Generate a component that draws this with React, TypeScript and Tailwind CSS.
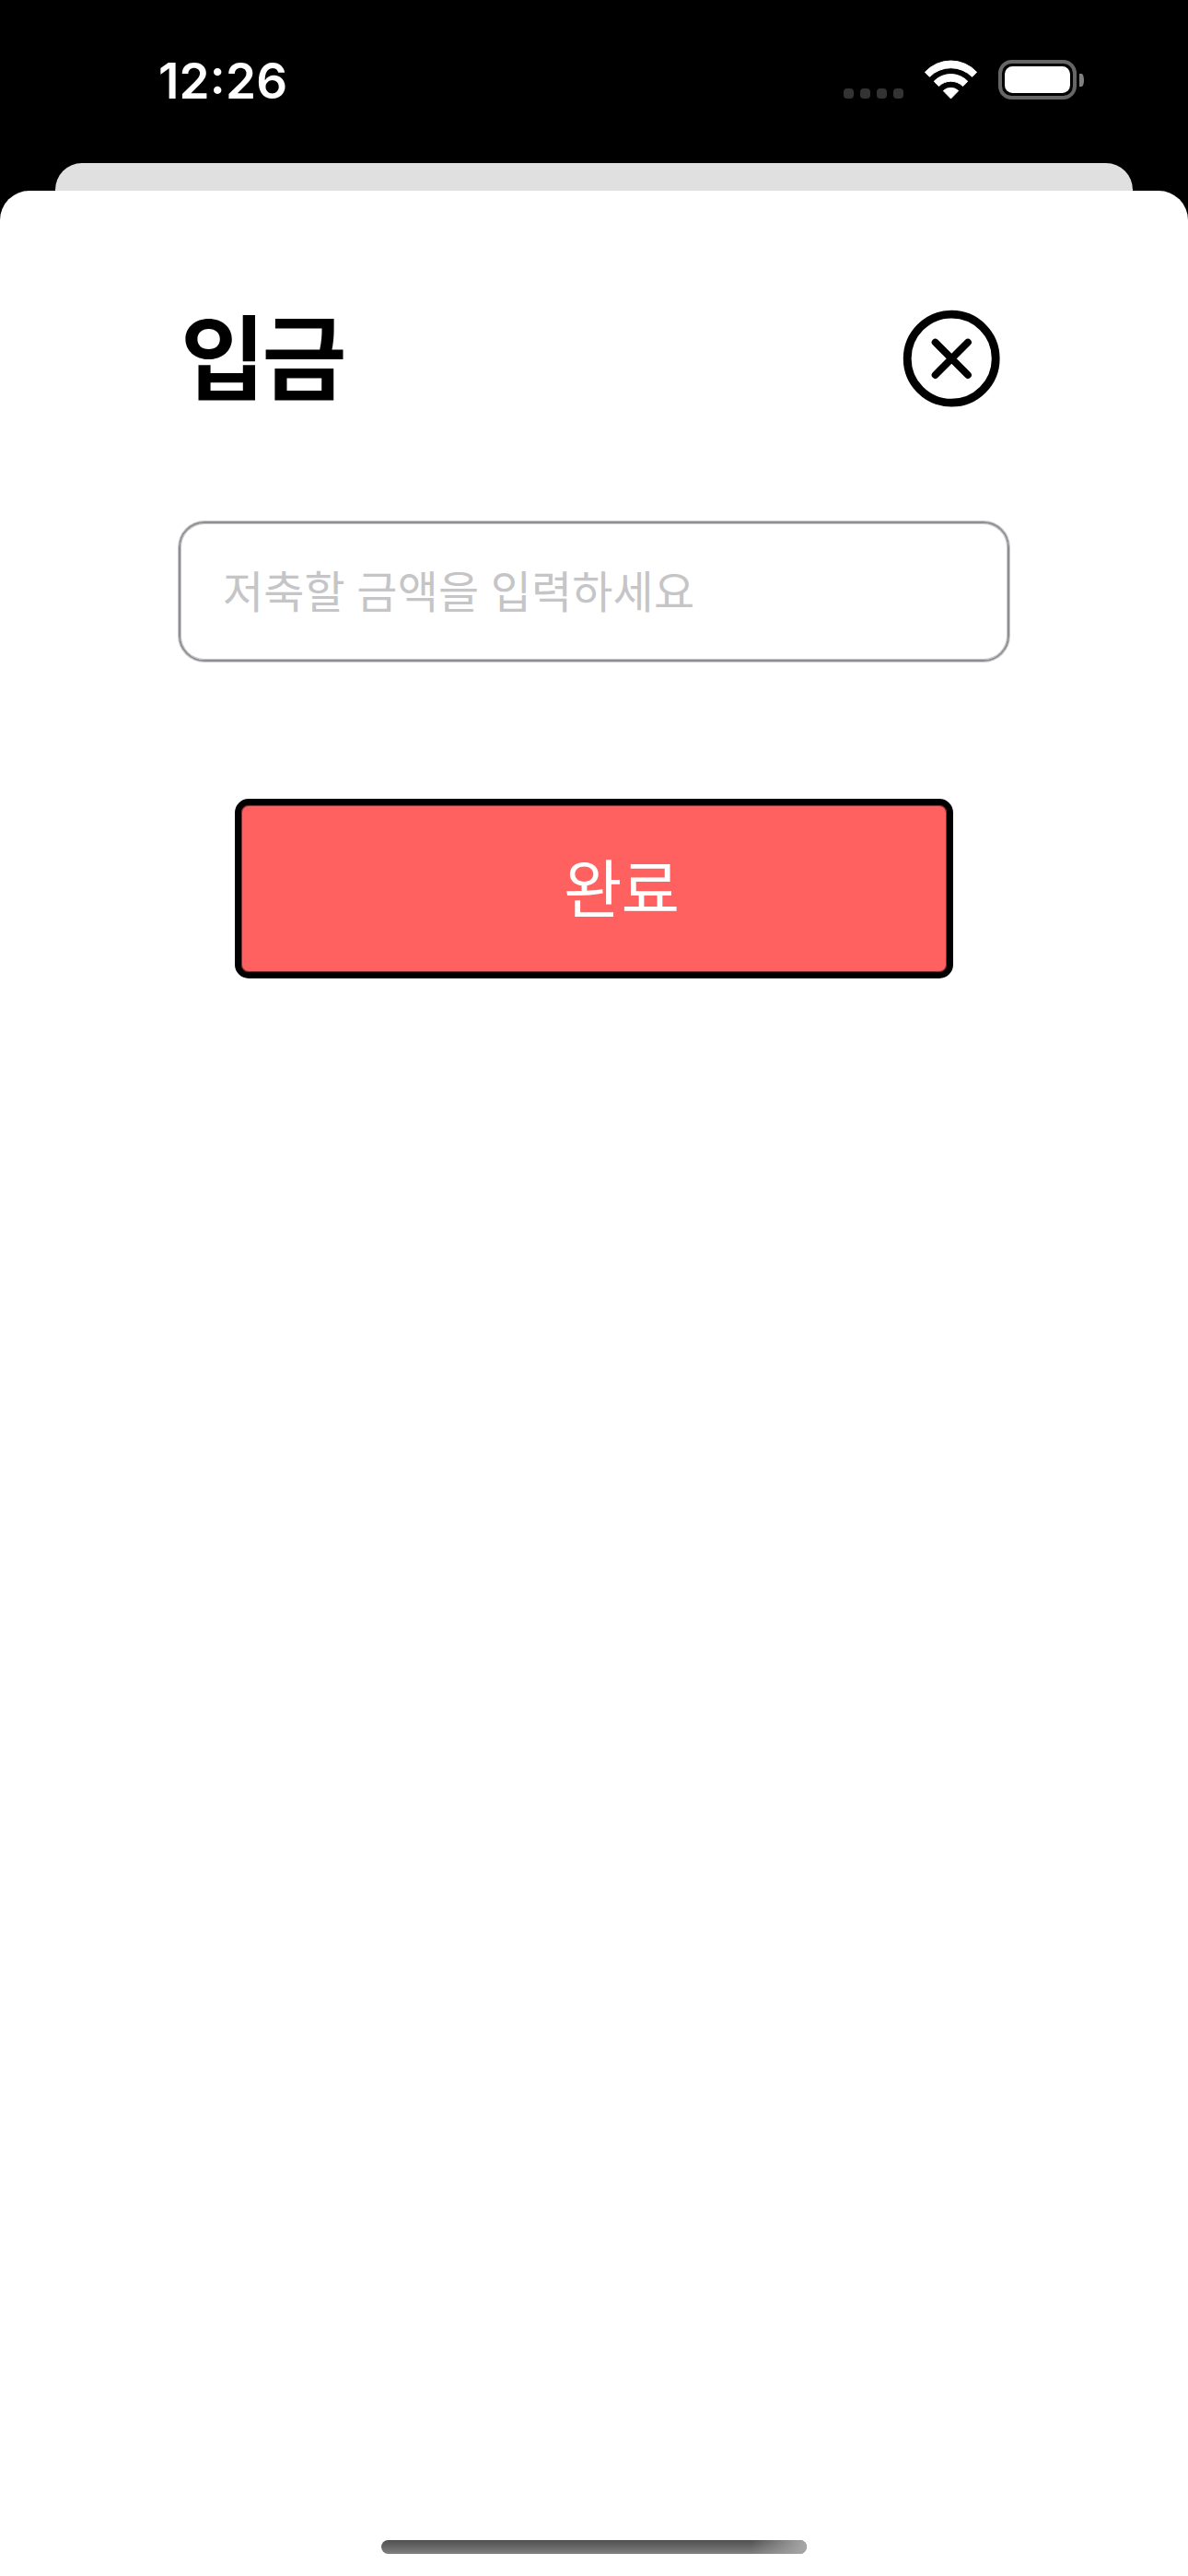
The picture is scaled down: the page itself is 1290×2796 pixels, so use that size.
function SignalDots() {
  return (
    <div className="mt-[96px] flex gap-[7px]">
      {[0, 1, 2, 3].map((dot) => (
        <span key={dot} className="size-[11px] rounded-[4px] bg-[#333333]" />
      ))}
    </div>
  );
}

function WifiIcon() {
  return (
    <svg className="mt-[65px] ml-[23px] block h-[43px] w-[58px]" viewBox="0 0 58 43" fill="#fff">
      <path
        stroke="#fff"
        strokeWidth="1"
        strokeLinejoin="round"
        d="M0.4 12.7A38.3 38.3 0 0 1 56.6 12.7L51.6 17.7A32.6 32.6 0 0 0 5.4 17.7Z M10.2 22.7A25.4 25.4 0 0 1 46.8 22.7L41.6 28A18.6 18.6 0 0 0 15.4 28Z M20.3 33A12 12 0 0 1 36.7 33L28.5 41.4Z"
        transform="translate(0 0.6)"
      />
    </svg>
  );
}

function BatteryIcon() {
  return (
    <div className="mt-[65px] ml-[22px] flex items-center">
      <div className="h-[43px] w-[85px] rounded-[14.5px] border-[4px] border-[#666666] p-[3px]">
        <div className="h-[29px] w-[71px] rounded-[8.5px] bg-white" />
      </div>
      <div className="ml-[3px] h-[14px] w-[5px] rounded-r-[100%] bg-[#808080]" />
    </div>
  );
}

function CloseIcon() {
  return (
    <svg className="block size-[106px]" viewBox="0 0 106 106" fill="none" stroke="#000">
      <circle cx="53.2" cy="53.2" r="48" strokeWidth="8.8" />
      <path d="M35.6 35.6L71 71M71 35.6L35.6 71" strokeWidth="7.8" strokeLinecap="round" />
    </svg>
  );
}

export default function App() {
  return (
    <div className="flex h-[2796px] w-[1290px] flex-col overflow-hidden bg-black font-['Noto_Sans_CJK_KR',sans-serif]">
      <div className="flex h-[177px] items-start justify-between pr-[113px] pl-[172px]">
        <div className="mt-[58px] font-['Inter',sans-serif] text-[53px] leading-[60px] font-semibold tracking-[0.2px] text-white">
          12<span className="relative -top-[5px]">:</span>26
        </div>
        <div className="flex items-start">
          <SignalDots />
          <WifiIcon />
          <BatteryIcon />
        </div>
      </div>

      <div className="mx-[60px] h-[30px] rounded-t-[29px] bg-[#e0e0e0]" />

      <main className="flex flex-1 flex-col items-center rounded-t-[32px] bg-white">
        <header className="flex w-full items-start justify-between pt-[124px] pr-[204px] pl-[196px]">
          <h1 className="mt-px text-[100px] leading-[101px] font-bold tracking-[-3.5px] text-black">입금</h1>
          <button className="mt-[5px]" aria-label="닫기">
            <CloseIcon />
          </button>
        </header>

        <div className="mt-[124px] flex h-[152px] w-[902px] items-center rounded-[28px] border-2 border-[#8e8e93] pb-[6px] pl-[46px] shadow-[0_0_0_1px_rgba(142,142,147,0.5),inset_0_0_0_1px_rgba(142,142,147,0.5)]">
          <span className="text-[48px] leading-[60px] tracking-[0.15px] [word-spacing:1.5px] whitespace-nowrap text-[#c5c5c7]">
            저축할 금액을 입력하세요
          </span>
        </div>

        <button className="mt-[149px] flex h-[195px] w-[780px] items-center rounded-[15px] border-[7px] border-black bg-[#ff6060] pb-[8px] pl-[350px] shadow-[inset_0_0_0_1px_rgba(0,0,0,0.5)]">
          <span className="text-[69px] leading-[80px] tracking-[-1px] whitespace-nowrap text-white">완료</span>
        </button>

        <div className="mt-auto mb-[24px] h-[15px] w-[462px] overflow-hidden rounded-full bg-linear-to-b from-[#505050] to-[#808080]">
          <div className="ml-auto h-full w-[60px] bg-linear-to-r from-transparent to-[#a8a8a8]" />
        </div>
      </main>
    </div>
  );
}
